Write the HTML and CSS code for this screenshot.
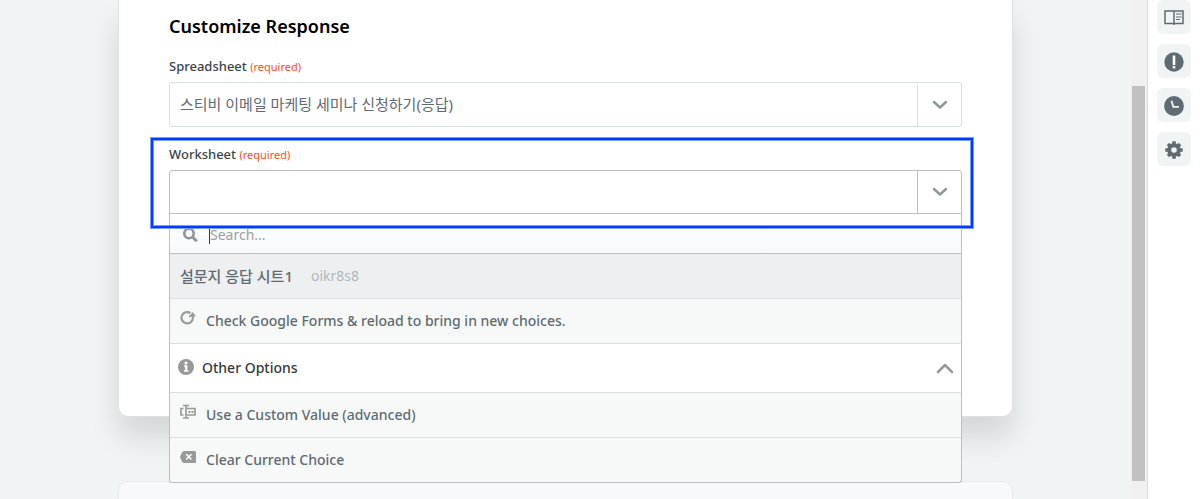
FILE: index.html
```html
<!DOCTYPE html>
<html lang="en">
<head>
<meta charset="utf-8">
<meta name="viewport" content="width=device-width, initial-scale=1">
<title>Customize Response</title>
<link rel="stylesheet" href="styles.css">
</head>
<body>
<main class="editor">
  <section class="card">
    <h1 class="card-title">Customize Response</h1>
    <div class="field">
      <label class="field-label" for="spreadsheet">Spreadsheet <span class="required">(required)</span></label>
      <div class="combo">
        <input class="combo-value" id="spreadsheet" type="text" value="스티비 이메일 마케팅 세미나 신청하기(응답)">
        <button class="combo-toggle" type="button" aria-label="Show spreadsheets"><svg width="16" height="10" viewBox="0 0 16 10"><path class="chevron" d="M2 2l6 5.500 6-5.500"/></svg></button>
      </div>
    </div>
    <div class="field field-marked">
      <label class="field-label" for="worksheet">Worksheet <span class="required">(required)</span></label>
      <div class="combo combo-open">
        <input class="combo-value" id="worksheet" type="text" value="">
        <button class="combo-toggle" type="button" aria-label="Show worksheets" aria-expanded="true"><svg width="16" height="10" viewBox="0 0 16 10"><path class="chevron" d="M2 2l6 5.500 6-5.500"/></svg></button>
      </div>
      <div class="menu">
        <div class="search">
          <svg class="search-icon" width="16" height="16" viewBox="0 0 16 16"><circle cx="7" cy="6.500" r="4.700" fill="none" stroke="#8f9699" stroke-width="2.600"/><path d="M10.500 10l4.300 4.300" stroke="#8f9699" stroke-width="3"/></svg>
          <span class="caret"></span>
          <input class="search-input" type="text" placeholder="Search..." aria-label="Search">
        </div>
        <button class="option option-active" type="button"><span class="option-name">설문지 응답 시트1</span><span class="option-id">oikr8s8</span></button>
        <button class="option" type="button">
          <svg class="option-icon" width="16" height="16" viewBox="0 0 16 16"><path d="M10.500 3.100A5.700 5.700 0 1 0 12.900 8" fill="none" stroke="#999" stroke-width="2.200"/><path d="M9 7.500V5.300h1.300L12.600 2 16 6.500h-2.200V8h-2V6.500z" fill="#999"/></svg>
          <span>Check Google Forms &amp; reload to bring in new choices.</span>
        </button>
        <button class="option option-group" type="button" aria-expanded="true">
          <svg width="16" height="16" viewBox="0 0 16 16"><circle cx="8" cy="8" r="8" fill="#999"/><circle cx="8" cy="4" r="1.500" fill="#fff"/><path d="M6 6.300h3.400v5H10.500v1.500H6v-1.500h1.100V7.800H6z" fill="#fff"/></svg>
          <span class="group-name">Other Options</span>
          <svg width="18" height="14" viewBox="0 0 18 14"><path class="chevron chevron-up" d="M3 12l7-7 7 7"/></svg>
        </button>
        <button class="option" type="button">
          <svg class="option-icon" width="16" height="16" viewBox="0 0 16 16"><path d="M3.500 4.500H1v6.500h2.500M7 4.500h8v6.500H7M6 1.500v13M3 1.500h6M3 14h6" fill="none" stroke="#999" stroke-width="1.700"/><path d="M8.500 7h2v2h-2zM11.500 7h2v2h-2z" fill="#999"/></svg>
          <span>Use a Custom Value (advanced)</span>
        </button>
        <button class="option" type="button">
          <svg class="option-icon" width="16" height="16" viewBox="0 0 16 16"><path d="M4 2h10.500Q16 2 16 3.500v9Q16 14 14.500 14H4Q2 14 0 8 2 2 4 2z" fill="#999"/><path d="M6.200 5.300l5.200 5.200M11.400 5.300l-5.200 5.200" stroke="#fff" stroke-width="1.600"/></svg>
          <span>Clear Current Choice</span>
        </button>
      </div>
    </div>
  </section>
  <section class="card card-next"></section>
</main>
<div class="scrollbar"><div class="thumb"></div></div>
<nav class="rail">
  <button class="rail-button" type="button" aria-label="Guide"><svg width="20" height="16" viewBox="0 0 20 16"><path d="M1 2h18v12.500H1zM10 1.500V16" fill="none" stroke="#5f6b72" stroke-width="1.500"/><path d="M12 5h5.500M12 8h2M14 8h3.500M12 10.500h4" stroke="#5f6b72" stroke-width="1"/></svg></button>
  <button class="rail-button" type="button" aria-label="Alerts"><svg width="20" height="21" viewBox="0 0 20 21"><circle cx="10" cy="11" r="9.700" fill="#5f6b72"/><path d="M8.700 4.500h2.600v9.500H8.700zM8.700 15h2.600v2.400H8.700z" fill="#fff"/></svg></button>
  <button class="rail-button" type="button" aria-label="History"><svg width="20" height="21" viewBox="0 0 20 21"><circle cx="10" cy="11" r="9.900" fill="#5f6b72"/><path d="M7.500 5.800l1.800 6H15" fill="none" stroke="#f0f4f5" stroke-width="1.800"/></svg></button>
  <button class="rail-button" type="button" aria-label="Settings"><svg width="18" height="20" viewBox="0 0 18 20"><g transform="translate(0 2)"><circle cx="9" cy="9" r="4.800" fill="none" stroke="#5f6b72" stroke-width="4"/><path d="M9 .3v4M9 13.700v4M.3 9h4M13.700 9h4M3 3l2.500 2.500M12.500 12.500l2.500 2.500M3 15l2.500-2.500M12.500 5.500l2.500-2.500" stroke="#5f6b72" stroke-width="3.600"/></g></svg></button>
</nav>
</body>
</html>
```
FILE: styles.css
```css
* { box-sizing: border-box; }

body {
  margin: 0;
  min-height: 100vh;
  display: flex;
  background: #f0f4f5;
  font-family: "Noto Sans", "Noto Sans CJK KR", sans-serif;
  font-size: 14px;
  color: #5f6b72;
}

button, input { font: inherit; color: inherit; margin: 0; }
button { cursor: pointer; }
svg { display: block; flex: none; }

.editor {
  flex: 1;
  height: 100vh;
  overflow: hidden;
}

.card {
  position: relative;
  max-width: 895px;
  margin: 0 auto;
  padding: 14px 50px 202px;
  background: #fff;
  border: 1px solid #dce1e4;
  border-top: 0;
  border-radius: 0 0 10px 10px;
  box-shadow: 0 20px 30px rgba(0, 0, 0, 0.12);
}

.card-next {
  z-index: -1;
  margin-top: 64px;
  padding: 24px;
  border: 1px solid #e6e9eb;
  border-radius: 10px 10px 0 0;
  background: #f8f9fb;
  box-shadow: none;
}

.card-title {
  margin: 0 0 18px;
  font-size: 18px;
  line-height: 24px;
  font-weight: 600;
  color: #000;
}

.field { position: relative; margin-bottom: 17px; }
.field:last-child { margin-bottom: 0; }

.field-label {
  display: block;
  margin-bottom: 5px;
  font-size: 13px;
  line-height: 20px;
  font-weight: 500;
  color: #3d4448;
}
.required { font-size: 11px; font-weight: 400; color: #ff4a19; }

.combo {
  display: flex;
  height: 45px;
  background: #fff;
  border: 1px solid #d9dee1;
  border-radius: 3px;
}
.combo-value {
  flex: 1;
  min-width: 0;
  padding: 0 10px 2px;
  border: 0;
  outline: 0;
  background: none;
  font-size: 15px;
}
.combo-toggle {
  width: 44px;
  padding: 0;
  display: grid;
  place-items: center;
  background: none;
  border: 0;
  border-left: 1px solid #d9dee1;
}
.chevron {
  fill: none;
  stroke: #92999c;
  stroke-width: 2.500;
  stroke-linecap: round;
  stroke-linejoin: round;
}
.chevron-up { stroke: #999; }

.combo-open { height: 44px; border-color: #bcbfc2; border-radius: 3px 3px 0 0; }
.combo-open .combo-toggle { border-color: #bcbfc2; }

.field-marked::after {
  content: "";
  position: absolute;
  inset: -6px -11px -14px -18px;
  border: 2px solid #003cff;
  box-shadow: 0 0 0 1px #7b9bff, inset 0 0 0 1px #7b9bff;
  pointer-events: none;
}

.menu {
  position: absolute;
  top: 100%;
  left: 0;
  right: 0;
  border: 1px solid #bcbfc2;
  border-top: 0;
  border-radius: 0 0 3px 3px;
  background: #f7f9f9;
  overflow: hidden;
}
.search {
  display: flex;
  align-items: center;
  height: 40px;
  padding: 2px 12px 0;
  border-bottom: 1px solid #bcbfc2;
  background: linear-gradient(#fff, #f7f9fb);
}
.search-icon { margin-right: 11px; }
.caret { width: 1px; height: 18px; background: #33383b; }
.search-input {
  flex: 1;
  min-width: 0;
  padding: 0;
  border: 0;
  outline: 0;
  background: none;
}
.search-input::placeholder { color: #999fa3; opacity: 1; }

.option {
  display: flex;
  align-items: center;
  width: 100%;
  height: 45px;
  padding: 0 10px 2px;
  border: 0;
  border-bottom: 1px solid #dbdfe1;
  background: none;
  font-weight: 500;
  text-align: left;
}
.option:last-child { height: 44px; border-bottom: 0; }
.option-active { background: #eeeff1; }
.option-name { font-size: 15px; }
.option-id { margin-left: 18px; font-weight: 400; color: #b1b7bb; }
.option-icon { margin: 0 10px 4px 0; }
.option-group {
  height: 49px;
  padding: 0 8px 2px;
  gap: 8px;
  background: #fff;
  color: #35393c;
}
.group-name { flex: 1; }

.scrollbar {
  width: 17px;
  padding: 86px 2px 18px 1px;
  display: flex;
  background: #f0f0f0;
  border-right: 1px solid #dcdcdc;
}
.thumb { flex: 1; background: #c1c1c1; }

.rail {
  display: flex;
  flex-direction: column;
  align-items: center;
  gap: 10px;
  width: 52px;
  background: #fff;
}
.rail-button {
  display: grid;
  place-items: center;
  width: 34px;
  height: 34px;
  padding: 0;
  border: 0;
  border-radius: 6px;
  background: #f0f4f5;
}
```
